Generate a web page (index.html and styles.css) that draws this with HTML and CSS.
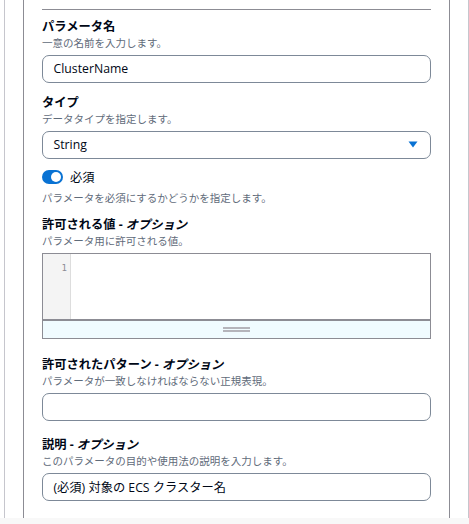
FILE: index.html
```html
<!DOCTYPE html>
<html lang="ja">
<head>
<meta charset="utf-8">
<link rel="stylesheet" href="styles.css">
</head>
<body>
<div class="page">
  <div class="outer">
    <div class="inner">
      <div class="sep"></div>

      <div class="field f-name">
        <div class="label">パラメータ名</div>
        <div class="desc">一意の名前を入力します。</div>
        <div class="input">ClusterName</div>
      </div>

      <div class="field f-type">
        <div class="label">タイプ</div>
        <div class="desc">データタイプを指定します。</div>
        <div class="input select">
          <span>String</span>
          <svg class="caret" width="10" height="7" viewBox="0 0 10 7"><path d="M0.5 0.5 L9.5 0.5 L5 6.5 Z" fill="#0972d3"/></svg>
        </div>
      </div>

      <div class="field f-toggle">
        <div class="toggle-row">
          <span class="toggle"><span class="knob"></span></span>
          <span class="toggle-label">必須</span>
        </div>
        <div class="desc">パラメータを必須にするかどうかを指定します。</div>
      </div>

      <div class="field f-values">
        <div class="label">許可される値 - <i>オプション</i></div>
        <div class="desc">パラメータ用に許可される値。</div>
        <div class="editor">
          <div class="editor-body">
            <div class="gutter">1</div>
            <div class="code"></div>
          </div>
          <div class="resize"><span class="grip"></span></div>
        </div>
      </div>

      <div class="field f-pattern">
        <div class="label">許可されたパターン - <i>オプション</i></div>
        <div class="desc">パラメータが一致しなければならない正規表現。</div>
        <div class="input"></div>
      </div>

      <div class="field f-desc">
        <div class="label">説明 - <i>オプション</i></div>
        <div class="desc">このパラメータの目的や使用法の説明を入力します。</div>
        <div class="input">(必須) 対象の ECS クラスター名</div>
      </div>
    </div>
  </div>
</div>
</body>
</html>
```

FILE: styles.css
```css
* { box-sizing: border-box; }
html, body { margin: 0; padding: 0; }
body {
  background: #f8f8f8;
  font-family: "Open Sans", "Noto Sans CJK JP", sans-serif;
  color: #000716;
}
.page {
  height: 518px;
  background: #ffffff;
  padding-left: 4px;
  display: flex;
}
.outer {
  width: 465px;
  border-left: 1px solid #c6c6cd;
  border-right: 1px solid #c6c6cd;
  padding-left: 18px;
}
.inner {
  width: 427px;
  height: 100%;
  border-left: 1px solid #8c8c94;
  border-right: 1px solid #8c8c94;
  padding: 9px 18px 0 18px;
  display: flex;
  flex-direction: column;
}
.sep {
  height: 1px;
  flex: none;
  background: #8c8c94;
}
.field { display: flex; flex-direction: column; flex: none; }
.f-name { margin-top: 8px; }
.f-type { margin-top: 11.5px; }
.f-toggle { margin-top: 10px; }
.f-values { margin-top: 6px; }
.f-pattern { margin-top: 17.5px; }
.f-desc { margin-top: 15.5px; }
.label {
  font-size: 12.25px;
  font-weight: 700;
  line-height: 17.5px;
  height: 17.5px;
}
.label i { font-style: italic; }
.desc {
  font-size: 10.5px;
  line-height: 14px;
  height: 14px;
  color: #5f6b7a;
  margin-bottom: 5px;
}
.input {
  height: 28px;
  border: 1px solid #7d8998;
  border-radius: 7px;
  padding: 0 10.5px;
  font-size: 12.25px;
  display: flex;
  align-items: center;
}
.select { justify-content: space-between; }
.select span { font-weight: 500; }
.caret { margin-right: 1.5px; }
.toggle-row {
  display: flex; align-items: center; gap: 7px;
  height: 17.5px; margin-bottom: 5px;
}
.toggle {
  width: 21px; height: 14px; border-radius: 7px;
  background: #0972d3; position: relative; flex: none;
}
.knob {
  position: absolute; right: 2px; top: 2px;
  width: 10px; height: 10px; border-radius: 50%; background: #fff;
}
.toggle-label { font-size: 12.25px; line-height: 17.5px; }
.editor {
  border: 1px solid #8c8c94;
  display: flex; flex-direction: column;
}
.editor-body { display: flex; height: 67px; border-bottom: 2px solid #8c8c94; }
.gutter {
  width: 28px;
  background: #f4f4f4;
  border-right: 1px solid #dddddd;
  font-family: "DejaVu Sans Mono", monospace;
  font-size: 9px;
  color: #8c8c94;
  text-align: right;
  padding: 8px 3px 0 0;
  line-height: 12px;
}
.code { flex: 1; background: #fff; }
.resize {
  height: 17px; background: #f0fbff;
  display: flex; align-items: center; justify-content: center;
}
.grip {
  width: 27px; height: 5px;
  border-top: 2px solid #b4b4bb; border-bottom: 2px solid #b4b4bb;
  margin-top: 1px;
}
```
